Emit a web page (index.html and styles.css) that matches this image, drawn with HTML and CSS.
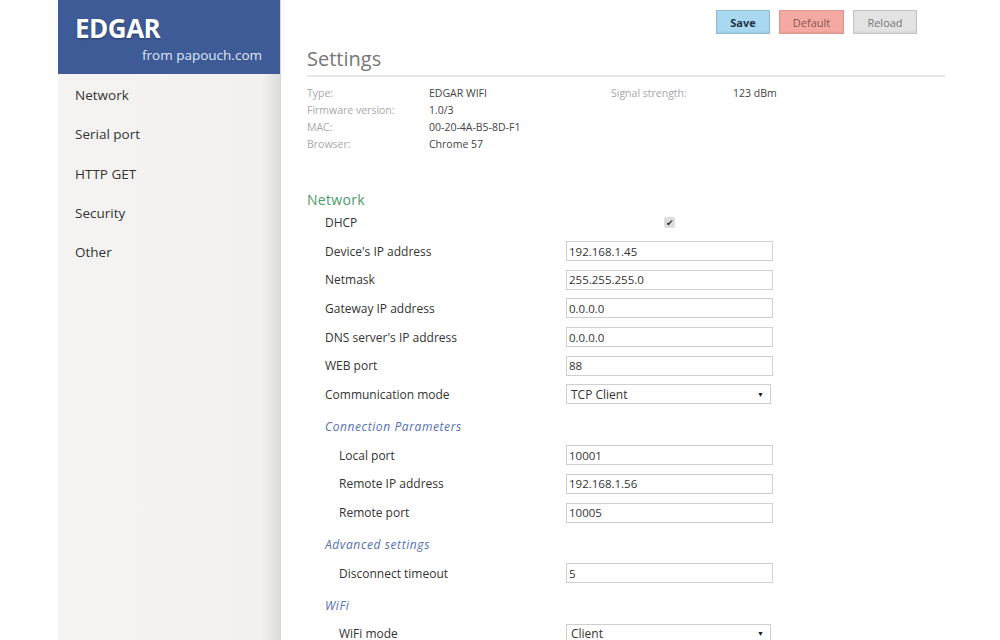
FILE: index.html
```html
<html>
<head>
    <title>EDGAR - Settings</title>
    <link rel="stylesheet" href="styles.css">
</head>
<body>
    <div class="page">
        <div class="sidebar">
            <div class="brand">
                <div class="brand-name">EDGAR</div>
                <div class="brand-from">from papouch.com</div>
            </div>
            <ul class="menu">
                <li>Network</li>
                <li>Serial port</li>
                <li>HTTP GET</li>
                <li>Security</li>
                <li>Other</li>
            </ul>
        </div>

        <div class="main">
            <div class="toolbar">
                <button class="btn btn-save">Save</button>
                <button class="btn btn-default">Default</button>
                <button class="btn btn-reload">Reload</button>
            </div>

            <h1 class="title">Settings</h1>

            <div class="info">
                <span class="info-label">Type:</span>
                <span class="info-value">EDGAR WIFI</span>
                <span class="info-label">Signal strength:</span>
                <span class="info-value">123 dBm</span>

                <span class="info-label">Firmware version:</span>
                <span class="info-value">1.0/3</span>
                <span></span><span></span>

                <span class="info-label">MAC:</span>
                <span class="info-value">00-20-4A-B5-8D-F1</span>
                <span></span><span></span>

                <span class="info-label">Browser:</span>
                <span class="info-value">Chrome 57</span>
                <span></span><span></span>
            </div>

            <h2 class="section">Network</h2>

            <div class="form">
                <div class="row">
                    <label>DHCP</label>
                    <div class="check-cell"><span class="check">&#10004;</span></div>
                </div>
                <div class="row">
                    <label>Device's IP address</label>
                    <input type="text" value="192.168.1.45">
                </div>
                <div class="row">
                    <label>Netmask</label>
                    <input type="text" value="255.255.255.0">
                </div>
                <div class="row">
                    <label>Gateway IP address</label>
                    <input type="text" value="0.0.0.0">
                </div>
                <div class="row">
                    <label>DNS server's IP address</label>
                    <input type="text" value="0.0.0.0">
                </div>
                <div class="row">
                    <label>WEB port</label>
                    <input type="text" value="88">
                </div>
                <div class="row">
                    <label>Communication mode</label>
                    <div class="select"><span>TCP Client</span><span class="arrow">&#9660;</span></div>
                </div>

                <div class="subsection">Connection Parameters</div>
                <div class="row sub">
                    <label>Local port</label>
                    <input type="text" value="10001">
                </div>
                <div class="row sub">
                    <label>Remote IP address</label>
                    <input type="text" value="192.168.1.56">
                </div>
                <div class="row sub">
                    <label>Remote port</label>
                    <input type="text" value="10005">
                </div>

                <div class="subsection">Advanced settings</div>
                <div class="row sub">
                    <label>Disconnect timeout</label>
                    <input type="text" value="5">
                </div>

                <div class="subsection">WiFi</div>
                <div class="row sub">
                    <label>WiFi mode</label>
                    <div class="select"><span>Client</span><span class="arrow">&#9660;</span></div>
                </div>
            </div>
        </div>
    </div>
</body>
</html>
```

FILE: styles.css
```css
* {
    margin: 0px;
    padding: 0px;
    box-sizing: border-box;
}

body
{
    font-family: "Open Sans", "Noto Sans", sans-serif;
    color: #333333;
    background-color: #ffffff;
    height: 640px;
    overflow: hidden;
}

.page
{
    display: flex;
    padding-left: 58px;
    height: 100%;
}

.sidebar
{
    width: 223px;
    height: 100%;
    background: linear-gradient(to right, #f4f3f1 0%, #f2f1ef 92%, #dcdcdb 100%);
    border-right: 1px solid #d6d6d6;
}

.brand
{
    background-color: #3e5b97;
    height: 74px;
    padding: 12px 18px 0 17px;
    color: #ffffff;
}

.brand-name
{
    font-size: 26px;
    font-weight: bold;
    line-height: 32px;
    letter-spacing: -0.5px;
    text-shadow: 0 1px 2px rgba(0, 0, 0, 0.35);
}

.brand-from
{
    text-align: right;
    font-size: 13.5px;
    color: #dfe5f2;
    line-height: 22px;
    margin-top: 0px;
}

.menu
{
    list-style: none;
    padding-top: 10px;
}

.menu li
{
    height: 39.3px;
    line-height: 22px;
    padding-left: 17px;
    font-size: 13.5px;
    color: #333333;
}

.main
{
    flex: 1;
    padding: 0 55px 0 26px;
}

.toolbar
{
    display: flex;
    justify-content: flex-end;
    gap: 9px;
    padding: 10px 28px 0 0;
}

.btn
{
    height: 24px;
    font-family: "Open Sans", "Noto Sans", sans-serif;
    font-size: 11px;
    border: 1px solid #c4c4c4;
    box-shadow: inset 0 -1px 2px rgba(0, 0, 0, 0.08);
}

.btn-save
{
    width: 54px;
    background-color: #a9d9f1;
    border-color: #8fbdd6;
    color: #223344;
    font-weight: bold;
}

.btn-default
{
    width: 65px;
    background-color: #f4aaa2;
    border-color: #dc9890;
    color: #8a5550;
}

.btn-reload
{
    width: 64px;
    background-color: #e3e3e3;
    color: #777777;
}

.title
{
    margin-top: 10px;
    font-size: 20px;
    font-weight: normal;
    color: #777777;
    line-height: 30px;
    padding-bottom: 1px;
    border-bottom: 2px solid #e6e6e6;
}

.info
{
    display: grid;
    grid-template-columns: 122px 182px 122px auto;
    margin-top: 8px;
    font-size: 10.5px;
    line-height: 17px;
}

.info-label
{
    color: #a8a8a8;
}

.info-value
{
    color: #444444;
}

.section
{
    margin-top: 39px;
    font-size: 14px;
    font-weight: normal;
    color: #4f9a68;
    line-height: 16px;
    letter-spacing: 0.3px;
}

.form
{
    padding-left: 18px;
}

.row
{
    display: flex;
    align-items: center;
    height: 28.7px;
}

.row label
{
    width: 241px;
    font-size: 12px;
    color: #333333;
}

.row.sub
{
    padding-left: 14px;
}

.row.sub label
{
    width: 227px;
}

.row input
{
    width: 207px;
    height: 20px;
    border: 1px solid #cfcfcf;
    padding: 0 2px;
    font-family: "Open Sans", "Noto Sans", sans-serif;
    font-size: 11.5px;
    color: #333333;
}

.check-cell
{
    width: 207px;
    text-align: center;
}

.check
{
    display: inline-block;
    width: 11px;
    height: 11px;
    background-color: #dddddd;
    border-radius: 2px;
    font-size: 9px;
    line-height: 11px;
    color: #333333;
    text-align: center;
}

.select
{
    display: flex;
    justify-content: space-between;
    align-items: center;
    width: 205px;
    height: 20px;
    border: 1px solid #cfcfcf;
    padding: 0 6px 0 4px;
    font-size: 12px;
    color: #333333;
}

.select .arrow
{
    font-size: 7px;
    color: #222222;
}

.subsection
{
    padding-top: 8px;
    padding-bottom: 4px;
    line-height: 20px;
    font-size: 12px;
    font-style: italic;
    color: #5470b3;
    letter-spacing: 0.6px;
}
```
